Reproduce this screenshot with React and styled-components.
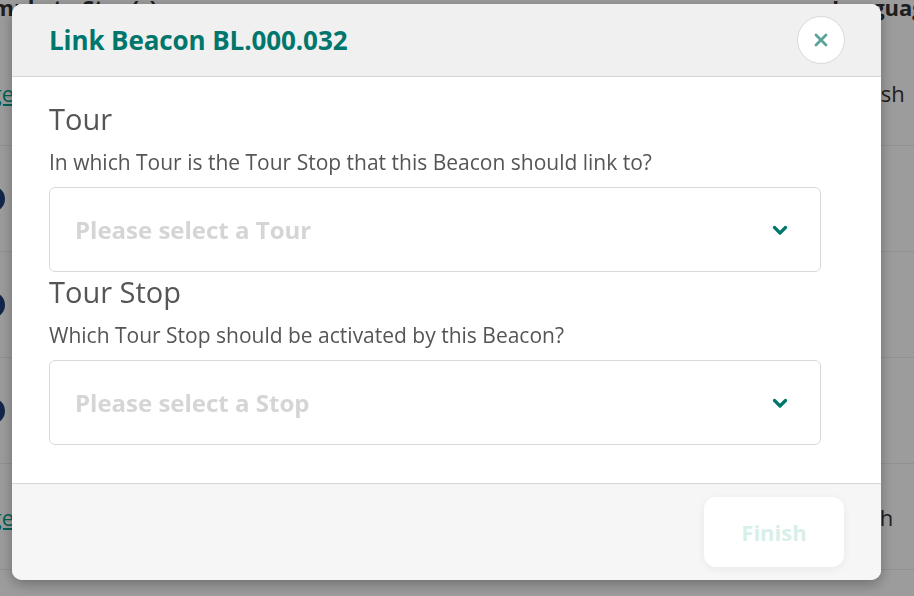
import styled, { createGlobalStyle } from 'styled-components';

const GlobalStyle = createGlobalStyle`
  html, body {
    margin: 0;
    padding: 0;
    width: 914px;
    height: 596px;
    overflow: hidden;
    font-family: 'Open Sans', 'Liberation Sans', sans-serif;
    background: #ffffff;
  }
  * {
    box-sizing: border-box;
  }
`;

const TEAL = '#00766c';

function Chevron() {
  return (
    <svg width="16" height="12" viewBox="0 0 16 12">
      <path d="M2.5 3.5 L8 9 L13.5 3.5" fill="none" stroke={TEAL} strokeWidth="3.2" strokeLinecap="round" strokeLinejoin="round" />
    </svg>
  );
}

function CloseIcon() {
  return (
    <svg width="16" height="16" viewBox="0 0 16 16">
      <path d="M3 3 L13 13 M13 3 L3 13" fill="none" stroke="#5aa39a" strokeWidth="2.8" strokeLinecap="round" />
    </svg>
  );
}

const backgroundRows = [
  { kind: 'link', lang: 'English' },
  { kind: 'dot' },
  { kind: 'dot' },
  { kind: 'dot' },
  { kind: 'link', lang: 'Dutch' },
];

export default function App() {
  return (
    <>
      <GlobalStyle />
      <Page>
        <TableHead>
          <HeadCell>Example to Stop(s)</HeadCell>
          <HeadCell right>Language</HeadCell>
        </TableHead>
        {backgroundRows.map((row, index) => (
          <TableRow key={index}>
            <LinkCell>{row.kind === 'link' ? <BgLink>Manage</BgLink> : <Dot />}</LinkCell>
            <LangCell>{row.lang || ''}</LangCell>
          </TableRow>
        ))}
      </Page>

      <Overlay>
        <Modal>
          <Header>
            <Title>Link Beacon BL.000.032</Title>
            <CloseButton>
              <CloseIcon />
            </CloseButton>
          </Header>

          <Body>
            <Section>
              <Label>Tour</Label>
              <Hint>In which Tour is the Tour Stop that this Beacon should link to?</Hint>
              <Select>
                <Placeholder>Please select a Tour</Placeholder>
                <Chevron />
              </Select>
            </Section>
            <Section>
              <Label>Tour Stop</Label>
              <Hint>Which Tour Stop should be activated by this Beacon?</Hint>
              <Select>
                <Placeholder>Please select a Stop</Placeholder>
                <Chevron />
              </Select>
            </Section>
          </Body>

          <Footer>
            <FinishButton disabled>Finish</FinishButton>
          </Footer>
        </Modal>
      </Overlay>
    </>
  );
}

const Page = styled.div`
  width: 960px;
  margin-left: -46px;
  margin-top: -14px;
`;

const TableHead = styled.div`
  display: flex;
  justify-content: space-between;
  height: 54px;
  padding: 6px 0 0 0;
`;

const HeadCell = styled.div`
  font-weight: 700;
  font-size: 22px;
  color: #333;
  white-space: nowrap;
  width: ${(props) => (props.right ? '82px' : 'auto')};
`;

const TableRow = styled.div`
  display: flex;
  justify-content: space-between;
  align-items: center;
  height: 106px;
  border-bottom: 1px solid #eee;
  &:first-of-type {
    height: 68px;
  }
`;

const LinkCell = styled.div`
  width: 60px;
  display: flex;
  justify-content: flex-end;
`;

const BgLink = styled.span`
  font-size: 22px;
  color: #00a08a;
  text-decoration: underline;
`;

const Dot = styled.span`
  width: 26px;
  height: 26px;
  border-radius: 50%;
  background: #1e3e78;
  margin-right: 9px;
`;

const LangCell = styled.div`
  width: 82px;
  white-space: nowrap;
  font-size: 22px;
  color: #333;
`;

const Overlay = styled.div`
  position: fixed;
  inset: 0;
  background: rgba(0, 0, 0, 0.39);
  padding: 4px 0 0 12px;
`;

const Modal = styled.div`
  width: 869px;
  height: 576px;
  border-radius: 10px;
  overflow: hidden;
  background: #fff;
  display: flex;
  flex-direction: column;
  box-shadow: 0 4px 14px rgba(0, 0, 0, 0.3);
`;

const Header = styled.div`
  height: 73px;
  flex-shrink: 0;
  display: flex;
  align-items: center;
  justify-content: space-between;
  padding: 0 36px 0 37px;
  background: #f0f0f0;
  border-bottom: 1px solid #d6d6d6;
`;

const Title = styled.h1`
  margin: 0;
  font-size: 26px;
  font-weight: 700;
  color: ${TEAL};
  letter-spacing: -0.1px;
`;

const CloseButton = styled.button`
  width: 48px;
  height: 48px;
  border-radius: 50%;
  border: 1px solid #dadada;
  background: #fff;
  display: flex;
  align-items: center;
  justify-content: center;
  padding: 0;
  cursor: pointer;
`;

const Body = styled.div`
  flex: 1;
  padding: 24px 60px 0 37px;
  border-bottom: 1px solid #d6d6d6;
`;

const Section = styled.div`
  display: flex;
  flex-direction: column;
  & + & {
    margin-top: 2px;
  }
`;

const Label = styled.h2`
  margin: 0;
  font-size: 29px;
  line-height: 36px;
  font-weight: 400;
  color: #555;
`;

const Hint = styled.p`
  margin: 12px 0 12px;
  font-size: 21px;
  line-height: 26px;
  color: #555;
`;

const Select = styled.div`
  height: 85px;
  border: 1px solid #d9d9d9;
  border-radius: 6px;
  display: flex;
  align-items: center;
  justify-content: space-between;
  padding: 0 32px 0 25px;
`;

const Placeholder = styled.span`
  font-size: 24px;
  font-weight: 700;
  color: #d5d5d5;
`;

const Footer = styled.div`
  height: 96px;
  flex-shrink: 0;
  background: #f6f6f6;
  display: flex;
  justify-content: flex-end;
  align-items: flex-start;
  padding: 13px 37px 0 0;
`;

const FinishButton = styled.button`
  width: 140px;
  height: 70px;
  border: none;
  border-radius: 12px;
  background: #fff;
  box-shadow: 0 2px 8px rgba(0, 0, 0, 0.06);
  font-family: 'Open Sans', 'Liberation Sans', sans-serif;
  font-size: 22px;
  font-weight: 700;
  color: #d8efe9;
  cursor: not-allowed;
`;
